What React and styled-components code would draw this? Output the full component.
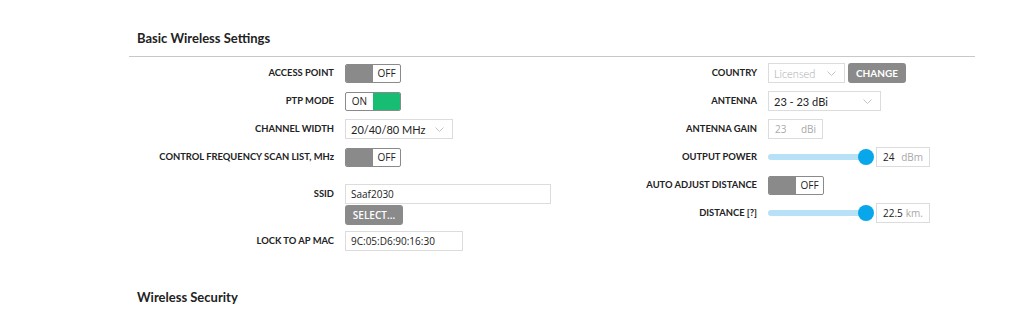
import React, { useState } from 'react';
import styled, { createGlobalStyle } from 'styled-components';

const GlobalStyle = createGlobalStyle`
  html, body {
    margin: 0;
    padding: 0;
    background: #fff;
  }
  body {
    font-family: Lato, "Open Sans", sans-serif;
    color: #222;
  }
`;

const Chevron = () => (
  <svg width="9" height="5" viewBox="0 0 9 5">
    <path d="M0.5 0.5 L4.5 4.5 L8.5 0.5" fill="none" stroke="#c4c4c4" strokeWidth="1" />
  </svg>
);

const Toggle = ({ on }) => (
  <ToggleBox>
    {on ? (
      <>
        <ToggleText>ON</ToggleText>
        <ToggleFill $on />
      </>
    ) : (
      <>
        <ToggleFill />
        <ToggleText>OFF</ToggleText>
      </>
    )}
  </ToggleBox>
);

const Slider = ({ value, unit }) => (
  <>
    <Track>
      <Thumb />
    </Track>
    <UnitInput $width={54}>
      <span>{value}</span>
      <Unit>{unit}</Unit>
    </UnitInput>
  </>
);

const App = () => {
  const [ssid] = useState('Saaf2030');

  return (
    <Page>
      <GlobalStyle />
      <Section>
        <Heading>Basic Wireless Settings</Heading>
        <Columns>
          <Column>
            <Row>
              <Label>ACCESS POINT</Label>
              <Toggle />
            </Row>
            <Row>
              <Label>PTP MODE</Label>
              <Toggle on />
            </Row>
            <Row>
              <Label>CHANNEL WIDTH</Label>
              <Select $width={108}>
                <span>20/40/80 MHz</span>
                <Chevron />
              </Select>
            </Row>
            <Row>
              <Label>CONTROL FREQUENCY SCAN LIST, MHz</Label>
              <Toggle />
            </Row>
            <TallRow>
              <Label>SSID</Label>
              <Stack>
                <TextInput $width={206}>{ssid}</TextInput>
                <GrayButton>SELECT...</GrayButton>
              </Stack>
            </TallRow>
            <Row $top={2}>
              <Label>LOCK TO AP MAC</Label>
              <TextInput $width={118}>9C:05:D6:90:16:30</TextInput>
            </Row>
          </Column>
          <Column>
            <Row>
              <Label>COUNTRY</Label>
              <Select $width={77} $disabled>
                <span>Licensed</span>
                <Chevron />
              </Select>
              <ChangeButton>CHANGE</ChangeButton>
            </Row>
            <Row>
              <Label>ANTENNA</Label>
              <Select $width={113}>
                <span>23 - 23 dBi</span>
                <Chevron />
              </Select>
            </Row>
            <Row>
              <Label>ANTENNA GAIN</Label>
              <UnitInput $width={55} $disabled>
                <span>23</span>
                <Unit>dBi</Unit>
              </UnitInput>
            </Row>
            <Row>
              <Label>OUTPUT POWER</Label>
              <Slider value="24" unit="dBm" />
            </Row>
            <Row>
              <Label>AUTO ADJUST DISTANCE</Label>
              <Toggle />
            </Row>
            <Row>
              <Label>DISTANCE [?]</Label>
              <Slider value="22.5" unit="km." />
            </Row>
          </Column>
        </Columns>
        <SubHeading>Wireless Security</SubHeading>
      </Section>
    </Page>
  );
};

const Page = styled.div`
  width: 1011px;
  height: 311px;
  overflow: hidden;
  padding-left: 129px;
  box-sizing: border-box;
`;

const Section = styled.div`
  width: 846px;
`;

const Heading = styled.div`
  padding: 28px 8px 8px;
  line-height: 20px;
  font-size: 13px;
  font-weight: 700;
  color: #222;
  border-bottom: 1px solid #c8c8c8;
`;

const SubHeading = styled.div`
  padding: 32px 8px 0;
  line-height: 20px;
  font-size: 13px;
  font-weight: 700;
  color: #222;
`;

const Columns = styled.div`
  display: grid;
  grid-template-columns: 1fr 1fr;
  padding-top: 2px;
`;

const Column = styled.div`
  display: flex;
  flex-direction: column;
`;

const Row = styled.div`
  display: flex;
  align-items: center;
  height: 28px;
  margin-top: ${(p) => p.$top || 0}px;
`;

const TallRow = styled.div`
  display: flex;
  align-items: flex-start;
  margin-top: 13px;
`;

const Stack = styled.div`
  display: flex;
  flex-direction: column;
  align-items: flex-start;
`;

const Label = styled.div`
  width: 205px;
  flex-shrink: 0;
  padding-right: 11px;
  box-sizing: content-box;
  text-align: right;
  font-size: 9.4px;
  font-weight: 700;
  color: #222;
  white-space: nowrap;
  line-height: 20px;
`;

const ToggleBox = styled.div`
  display: flex;
  width: 56px;
  height: 19px;
  box-sizing: border-box;
  border: 1px solid #8a8a8a;
  border-radius: 2px;
  overflow: hidden;
  background: #fff;
`;

const ToggleFill = styled.div`
  width: 28px;
  height: 100%;
  background: ${(p) => (p.$on ? '#17bd73' : '#8a8a8a')};
`;

const ToggleText = styled.div`
  width: 28px;
  text-align: center;
  font-family: "Open Sans", sans-serif;
  font-size: 10px;
  line-height: 17px;
  color: #222;
`;

const Select = styled.div`
  display: flex;
  align-items: center;
  justify-content: space-between;
  width: ${(p) => p.$width}px;
  height: 20px;
  box-sizing: border-box;
  padding: 0 8px 0 5px;
  border: 1px solid #dcdcdc;
  font-size: 11px;
  font-weight: ${(p) => (p.$disabled ? 300 : 400)};
  color: ${(p) => (p.$disabled ? '#aaa' : '#222')};
`;

const TextInput = styled.div`
  width: ${(p) => p.$width}px;
  height: 20px;
  box-sizing: border-box;
  padding: 0 5px;
  border: 1px solid #dcdcdc;
  font-family: "Open Sans", sans-serif;
  font-size: 10px;
  line-height: 18px;
  color: #222;
`;

const UnitInput = styled.div`
  display: flex;
  align-items: center;
  justify-content: space-between;
  width: ${(p) => p.$width}px;
  height: 20px;
  box-sizing: border-box;
  padding: 0 6px 0 6px;
  border: 1px solid #dcdcdc;
  font-family: "Open Sans", sans-serif;
  font-size: 10px;
  color: ${(p) => (p.$disabled ? '#aaa' : '#222')};
`;

const Unit = styled.span`
  color: #a8a8a8;
`;

const GrayButton = styled.div`
  margin-top: 1px;
  width: 58px;
  height: 20px;
  border-radius: 3px;
  background: #8a8a8a;
  color: #fff;
  font-family: "Open Sans", sans-serif;
  font-weight: 600;
  font-size: 10px;
  line-height: 20px;
  text-align: center;
`;

const ChangeButton = styled.div`
  margin-left: 3px;
  width: 58px;
  height: 20px;
  border-radius: 3px;
  background: #8a8a8a;
  color: #fff;
  font-weight: 700;
  font-size: 10px;
  line-height: 20px;
  text-align: center;
`;

const Track = styled.div`
  position: relative;
  width: 98px;
  height: 6px;
  border-radius: 3px;
  background: #b7e1f6;
  margin-right: 10px;
`;

const Thumb = styled.div`
  position: absolute;
  right: -8px;
  top: -5px;
  width: 16px;
  height: 16px;
  border-radius: 50%;
  background: #08a7ec;
`;

export default App;
